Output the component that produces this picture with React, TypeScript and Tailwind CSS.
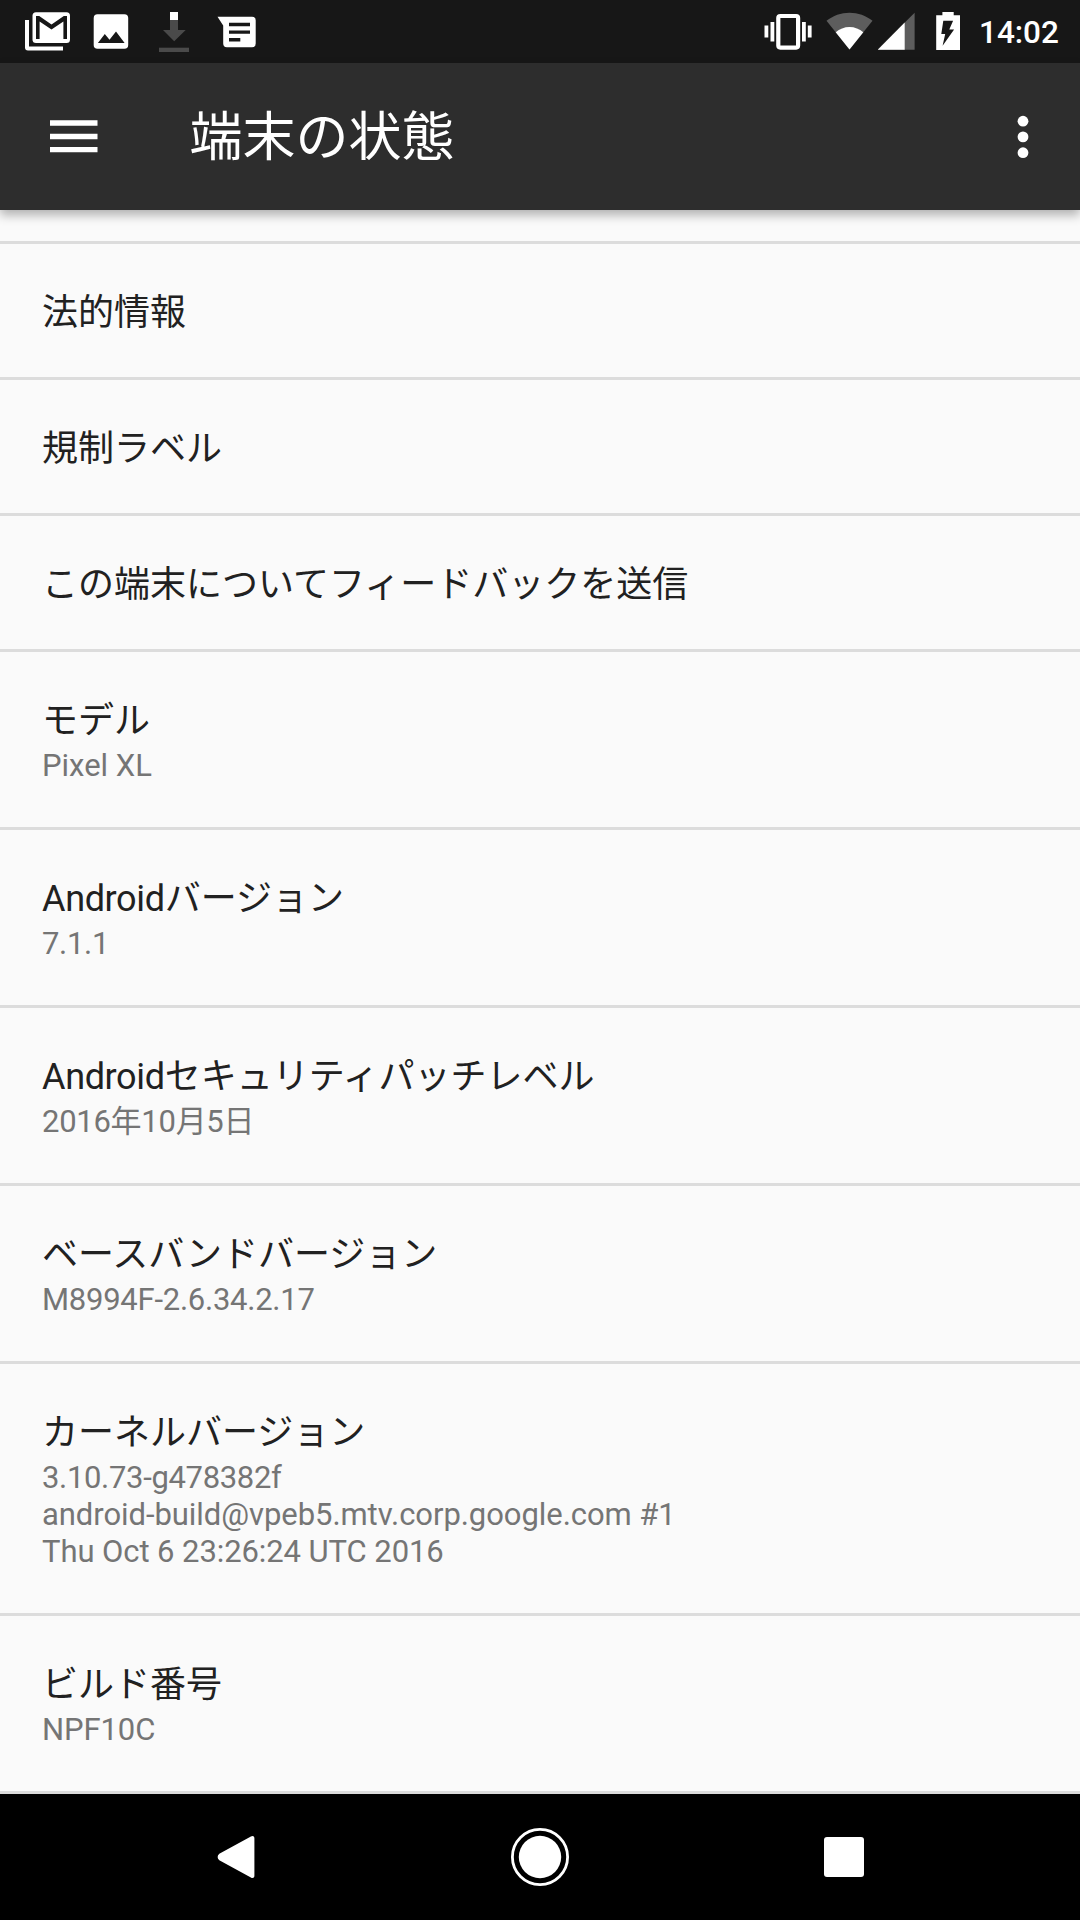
import React from 'react';

type Item = {
    latin?: string;
    title: string;
    summary?: string[];
    tracking?: string[];
};

const items: Item[] = [
    { title: '法的情報' },
    { title: '規制ラベル' },
    { title: 'この端末についてフィードバックを送信' },
    { title: 'モデル', summary: ['Pixel XL'] },
    { latin: 'Android', title: 'バージョン', summary: ['7.1.1'], tracking: ['tracking-[-0.3px]'] },
    { latin: 'Android', title: 'セキュリティパッチレベル', summary: ['2016年10月5日'], tracking: ['tracking-[-0.27px]'] },
    { title: 'ベースバンドバージョン', summary: ['M8994F-2.6.34.2.17'], tracking: ['tracking-[-0.25px]'] },
    {
        title: 'カーネルバージョン',
        summary: ['3.10.73-g478382f', 'android-build@vpeb5.mtv.corp.google.com #1', 'Thu Oct 6 23:26:24 UTC 2016'],
        tracking: ['tracking-[-0.33px]', 'tracking-[-0.06px]', 'tracking-[-0.08px]'],
    },
    { title: 'ビルド番号', summary: ['NPF10C'], tracking: ['tracking-[-0.1px]'] },
];

const GmailIcon = () => (
    <svg width="46" height="40" viewBox="25 12 46 40">
        <path d="M25 20h4v26.5h34v4H28a3 3 0 0 1-3-3z" fill="#fff" />
        <rect x="32.5" y="12.2" width="37.5" height="30.8" rx="3.5" fill="#fff" />
        <path d="M36 39V16h3.2l12.3 8.6L63.8 16H67v23h-3.6V21.5l-11.9 8.1-11.9-8.1V39z" fill="#171717" />
    </svg>
);

const ImageIcon = () => (
    <svg width="36" height="36" viewBox="92.5 14 36 36">
        <rect x="93.2" y="14.2" width="34.5" height="34.5" rx="3.8" fill="#fff" />
        <path d="M97.4 43l6.9-9 4.7 5.8 6.5-8.3 8.6 11.5z" fill="#171717" />
    </svg>
);

const DownloadIcon = () => (
    <svg width="30" height="40" viewBox="159 12 30 40">
        <path d="M170 20h8v10h7.7l-11.5 11.3L163 30h7z" fill="#4a4a4a" />
        <path d="M159 47.7h30v4.3h-30z" fill="#4a4a4a" />
        <path d="M170 12h8v8h-8z" fill="#fff" />
    </svg>
);

const MessageIcon = () => (
    <svg width="39" height="32" viewBox="217 15.5 39 32">
        <path d="M217.5 16.2h34.6a3.6 3.6 0 0 1 3.6 3.6v23.3a3.6 3.6 0 0 1-3.600 3.600h-25.300a3.600 3.600 0 0 1-3.600-3.600V25z" fill="#fff" />
        <path d="M229 22.2h21v3.6h-21zM229 30h21v3.300h-21zM229 37.500h11.300v3.400H229z" fill="#171717" />
    </svg>
);

const VibrateIcon = () => (
    <svg width="48" height="38" viewBox="764.5 13 48 38">
        <rect x="778.8" y="16" width="19.8" height="31.6" rx="2" fill="none" stroke="#fff" strokeWidth="4.2" />
        <path d="M771 22h3.800v19.500H771zM765 25.500h3.800v12H765zM802.500 22h3.800v19.500h-3.800zM808.300 25.500h3.800v12h-3.800z" fill="#fff" />
    </svg>
);

const WifiIcon = () => (
    <svg width="47" height="38" viewBox="826.5 12 47 38">
        <path d="M850 49.5L827 20.800C833.500 15.600 841.500 12.700 850 12.700s16.500 2.900 23 8.100z" fill="#5d5d5d" />
        <path d="M850 49.5L836.200 32.300c3.900-3.300 8.600-5.300 13.800-5.300s9.900 2 13.800 5.300z" fill="#fff" />
    </svg>
);

const SignalIcon = () => (
    <svg width="37" height="38" viewBox="878 12 37 38">
        <path d="M914.6 12.7v37h-37z" fill="#5d5d5d" />
        <path d="M904.7 22.6v27.1h-27z" fill="#fff" />
    </svg>
);

const BatteryIcon = () => (
    <svg width="24" height="38" viewBox="936 12 24 38">
        <path d="M942.4 12h11.300v3.200h6.300V50h-23.800V15.200h6.200z" fill="#fff" />
        <path d="M943.3 20.800h9.800l-3.800 8.800h4.800l-11.500 16.100 2.600-11.600h-3.900z" fill="#171717" />
    </svg>
);

const StatusBar = () => (
    <div className="h-[63px] bg-[#171717] flex justify-between pl-[25px] pr-[21px]">
        <div className="flex items-start pt-3">
            <GmailIcon />
            <div className="ml-[21.5px] mt-0.5"><ImageIcon /></div>
            <div className="ml-[30.5px]"><DownloadIcon /></div>
            <div className="ml-7 mt-[3.5px]"><MessageIcon /></div>
        </div>
        <div className="flex items-start pt-3">
            <div className="mt-px"><VibrateIcon /></div>
            <div className="ml-[14.5px]"><WifiIcon /></div>
            <div className="ml-[4.5px]"><SignalIcon /></div>
            <div className="ml-[21px]"><BatteryIcon /></div>
            <span className="ml-[19.5px] w-20 text-[31.5px] leading-[38px] mt-0.5 font-medium text-white whitespace-nowrap">14:02</span>
        </div>
    </div>
);

const Toolbar = () => (
    <header className="h-[147px] bg-[#2d2d2d] flex items-center pl-[50px] pr-[51.5px] relative z-10 shadow-[0_5px_10px_rgba(0,0,0,0.3)]">
        <svg width="48" height="35" viewBox="50 119 48 35" fill="#fff">
            <path d="M50 120.300h47.500v5.500H50zM50 133.800h47.500v5.500H50zM50 146.900h47.500v5.400H50z" />
        </svg>
        <h1 className="ml-[91.5px] pt-[3px] text-[53px] leading-[60px] font-normal text-white">端末の状態</h1>
        <svg className="ml-auto" width="12" height="44" viewBox="1016.5 114.5 12 44" fill="#fff">
            <circle cx="1022.5" cy="120.7" r="5.4" />
            <circle cx="1022.5" cy="136.4" r="5.4" />
            <circle cx="1022.5" cy="152.2" r="5.4" />
        </svg>
    </header>
);

const Row = ({ latin, title, summary, tracking }: Item) => (
    <li className="px-[42px] pt-[45px] pb-10 border-b-[3px] border-[#dcdcdc]">
        <p className="text-[36px] leading-[48px] text-[#212121]">
            {latin && <span className="tracking-[-0.35px]">{latin}</span>}
            {title}
        </p>
        {summary && (
            <div className="mt-0.5 mb-[3px]">
                {summary.map((line, i) => (
                    <p key={line} className={`text-[31px] leading-[37px] text-[#757575] ${tracking ? tracking[i] : ''}`}>{line}</p>
                ))}
            </div>
        )}
    </li>
);

const NavBar = () => (
    <nav className="h-[126px] bg-black flex items-center justify-between pl-[217px] pr-[216px]">
        <svg width="38" height="44" viewBox="217 1835 38 44">
            <path d="M250.9 1836.5c1.600-1.200 3.500-.4 3.500 1.700v37.600c0 2.100-1.900 2.900-3.500 1.700l-31.600-17.200c-2.200-1.700-2.200-4.900 0-6.600z" fill="#fff" />
        </svg>
        <svg width="58" height="58" viewBox="511 1828 58 58">
            <circle cx="540" cy="1857" r="27.6" fill="none" stroke="#fff" strokeWidth="2.8" />
            <circle cx="540" cy="1857" r="21.2" fill="#fff" />
        </svg>
        <div className="size-10 rounded-[3px] bg-white" />
    </nav>
);

const App = () => {
    return (
        <div className="w-[1080px] h-[1920px] flex flex-col overflow-hidden bg-[#fafafa] font-[Roboto,'Noto_Sans_CJK_JP',sans-serif]">
            <StatusBar />
            <Toolbar />
            <main className="flex-1">
                <div className="h-[34px] border-b-[3px] border-[#dcdcdc]"></div>
                <ul>
                    {items.map((item) => (
                        <Row key={(item.latin ?? '') + item.title} {...item} />
                    ))}
                </ul>
            </main>
            <NavBar />
        </div>
    );
};

export default App;
